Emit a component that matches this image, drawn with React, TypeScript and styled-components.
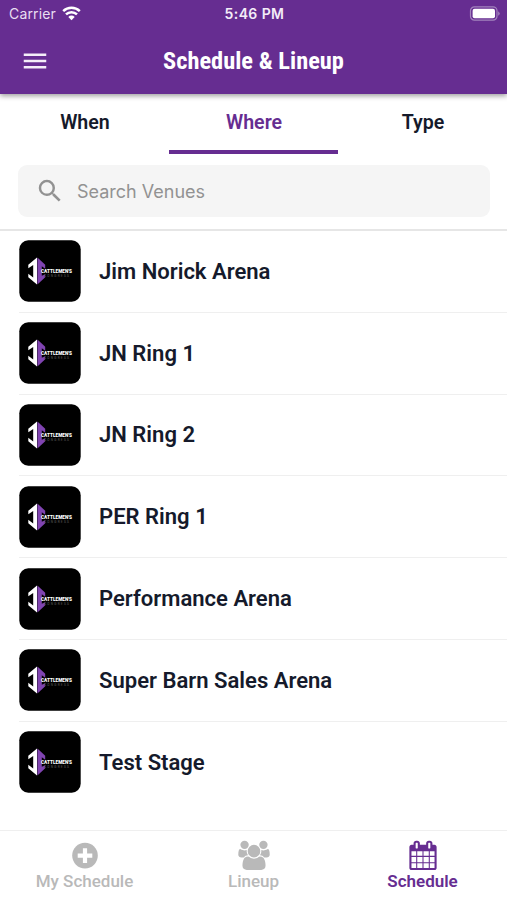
import React from "react";
import styled, { createGlobalStyle } from "styled-components";
import { MdMenu, MdSearch } from "react-icons/md";

const Global = createGlobalStyle`
  * { box-sizing: border-box; }
  body { margin: 0; background: #fff; font-family: Roboto, "Liberation Sans", sans-serif; }
`;

const Screen = styled.div`
  width: 507px;
  height: 900px;
  display: flex;
  flex-direction: column;
  background: #fff;
  overflow: hidden;
`;

const Header = styled.header`
  flex: none;
  height: 94px;
  background: #662d91;
  color: #fff;
  box-shadow: 0 2px 5px rgba(0, 0, 0, 0.38);
`;

const StatusBar = styled.div`
  height: 27px;
  padding: 0 7px 0 9px;
  display: grid;
  grid-template-columns: 1fr auto 1fr;
  align-items: center;
  font-family: Inter, sans-serif;
  font-size: 14px;
`;

const Carrier = styled.div`
  display: flex;
  align-items: center;
  gap: 6px;
  color: #e9dff1;
  letter-spacing: 0.15px;
`;

const Clock = styled.div`
  font-weight: 600;
  font-size: 14px;
  letter-spacing: 0.4px;
  color: #f3ecf8;
`;

const Battery = styled.svg`
  justify-self: end;
  display: block;
`;

const TitleBar = styled.div`
  height: 67px;
  display: grid;
  grid-template-columns: 1fr auto 1fr;
  align-items: center;
  padding: 0 20px;
`;

const MenuButton = styled.button`
  width: 30px;
  height: 30px;
  padding: 0;
  border: 0;
  background: none;
  color: #f4eef8;
  svg { display: block; }
`;

const Title = styled.h1`
  margin: 0;
  padding-top: 1px;
  font-family: "Roboto Condensed", Roboto, sans-serif;
  font-stretch: 75%;
  font-size: 24.4px;
  font-weight: 700;
  line-height: 30px;
  white-space: nowrap;
`;

const Tabs = styled.nav`
  flex: none;
  height: 60px;
  display: grid;
  grid-template-columns: repeat(3, 1fr);
`;

const Tab = styled.a<{ $active?: boolean }>`
  display: flex;
  align-items: center;
  justify-content: center;
  padding-left: 1px;
  font-size: 19.6px;
  font-weight: 600;
  color: ${(p) => (p.$active ? "#662d91" : "#151a2b")};
  box-shadow: inset 0 -4px ${(p) => (p.$active ? "#662d91" : "transparent")};
  padding-bottom: 4px;
`;

const SearchArea = styled.div`
  flex: none;
  height: 77px;
  padding: 11px 17px 14px 18px;
  border-bottom: 2px solid #e6e6e6;
`;

const SearchField = styled.div`
  height: 52px;
  display: flex;
  align-items: center;
  gap: 12px;
  padding-left: 17px;
  border-radius: 9px;
  background: #f5f5f5;
  color: #929292;
  font-family: Inter, sans-serif;
  font-size: 18px;
`;

const List = styled.ul`
  flex: 1;
  margin: 0;
  padding: 0 0 0 19px;
  list-style: none;
`;

const Row = styled.li`
  height: 81.8px;
  display: flex;
  align-items: center;
  gap: 18px;
  border-bottom: 1px solid #efefef;
  color: #151a2b;
  font-size: 22.05px;
  font-weight: 600;
  &:last-child { border-color: transparent; }
`;

const Thumb = styled.svg`
  flex: none;
  width: 62px;
  height: 62px;
`;

const BottomBar = styled.nav`
  flex: none;
  height: 70px;
  display: grid;
  grid-template-columns: repeat(3, 1fr);
  border-top: 1px solid #efefef;
`;

const BottomItem = styled.a<{ $active?: boolean }>`
  display: flex;
  flex-direction: column;
  align-items: center;
  padding-top: 9px;
  color: ${(p) => (p.$active ? "#662d91" : "#b9b9b9")};
  font-size: 17px;
  font-weight: ${(p) => (p.$active ? 600 : 500)};
  line-height: 22px;
  svg { display: block; height: 30px; }
`;

const Wifi = () => (
  <svg width="19" height="15" viewBox="0 0 19 15" fill="none" stroke="#fff" strokeWidth="2.5">
    <path d="M1.2 5.2a12 12 0 0 1 16.6 0M4 8.4a7.8 7.8 0 0 1 11 0" />
    <path d="M6.3 10.9a4.5 4.5 0 0 1 6.4 0l-3.2 3.3z" fill="#fff" stroke="none" />
  </svg>
);

const VenueLogo = () => (
  <Thumb viewBox="0 0 62 62">
    <rect x=".3" y=".3" width="61.4" height="61.4" rx="9" fill="#000" />
    <path d="M18 17.5v27L9.3 37.2v-3.4l4.9 3.6V25L9.3 28.2v-3.4z" fill="#fff" />
    <path d="M18.4 17.5l7.8 7.3v4l-3.4-2.5v9.5l3.4-1.5v3l-7.8 7.2z" fill="#8044b1" />
    <text x="22" y="32.8" fill="#fff" fontFamily="Roboto, sans-serif" fontSize="6" fontWeight="900" textLength="31" lengthAdjust="spacingAndGlyphs">CATTLEMEN'S</text>
    <text x="25" y="36.8" fill="#4d4d4d" fontFamily="Roboto, sans-serif" fontSize="3.2" fontWeight="500" textLength="25">CONGRESS</text>
  </Thumb>
);

const PlusIcon = () => (
  <svg width="26" height="30" viewBox="0 0 26 30">
    <circle cx="13" cy="15.6" r="12.8" fill="currentColor" />
    <path d="M10.9 8.3h4.2v5.2h5.2v4.2h-5.2v5.2h-4.2v-5.2H5.7v-4.2h5.2z" fill="#fff" />
  </svg>
);

const GroupIcon = () => (
  <svg width="32" height="30" viewBox="0 -40 1920 1832" fill="currentColor">
    <path d="M593 896q-162 5-265 128h-134q-82 0-138-40.5t-56-118.5q0-353 124-353 6 0 43.5 21t97.5 42.5 119 21.5q67 0 133-23-5 37-5 66 0 139 81 256zm1071 637q0 120-73 189.5t-194 69.5h-874q-121 0-194-69.5t-73-189.5q0-53 3.5-103.5t14-109 26.5-108.5 43-97.5 62-81 85.5-53.5 111.5-20q10 0 43 21.5t73 48 107 48 135 21.5 135-21.5 107-48 73-48 43-21.5q61 0 111.5 20t85.5 53.5 62 81 43 97.5 26.5 108.5 14 109 3.5 103.5zm-1024-1277q0 106-75 181t-181 75-181-75-75-181 75-181 181-75 181 75 75 181zm704 384q0 159-112.5 271.5t-271.5 112.5-271.5-112.5-112.5-271.5 112.5-271.5 271.5-112.5 271.5 112.5 112.5 271.5zm576 225q0 78-56 118.5t-138 40.5h-134q-103-123-265-128 81-117 81-256 0-29-5-66 66 23 133 23 59 0 119-21.5t97.5-42.5 43.5-21q124 0 124 353zm-128-609q0 106-75 181t-181 75-181-75-75-181 75-181 181-75 181 75 75 181z" />
  </svg>
);

const CalendarIcon = () => (
  <svg width="30" height="30" viewBox="0 -40 1792 1832" fill="currentColor">
    <path d="M192 1664h288v-288h-288v288zm352 0h320v-288h-320v288zm-352-352h288v-320h-288v320zm352 0h320v-320h-320v320zm-352-384h288v-288h-288v288zm736 736h320v-288h-320v288zm-384-736h320v-288h-320v288zm768 736h288v-288h-288v288zm-384-352h320v-320h-320v320zm-352-864v-288q0-13-9.5-22.5t-22.5-9.5h-64q-13 0-22.5 9.5t-9.5 22.5v288q0 13 9.5 22.5t22.5 9.5h64q13 0 22.5-9.5t9.5-22.5zm736 864h288v-320h-288v320zm-384-384h320v-288h-320v288zm384 0h288v-288h-288v288zm32-480v-288q0-13-9.5-22.5t-22.5-9.5h-64q-13 0-22.5 9.5t-9.5 22.5v288q0 13 9.5 22.5t22.5 9.5h64q13 0 22.5-9.5t9.5-22.5zm384-64v1280q0 52-38 90t-90 38h-1408q-52 0-90-38t-38-90v-1280q0-52 38-90t90-38h128v-96q0-66 47-113t113-47h64q66 0 113 47t47 113v96h384v-96q0-66 47-113t113-47h64q66 0 113 47t47 113v96h128q52 0 90 38t38 90z" />
  </svg>
);

const venues = ["Jim Norick Arena", "JN Ring 1", "JN Ring 2", "PER Ring 1", "Performance Arena", "Super Barn Sales Arena", "Test Stage"];

export default function App() {
  return (
    <Screen>
      <Global />
      <Header>
        <StatusBar>
          <Carrier>Carrier <Wifi /></Carrier>
          <Clock>5:46 PM</Clock>
          <Battery width="31" height="15" viewBox="0 0 31 15">
            <rect x="1.5" y=".8" width="26.5" height="13.4" rx="4" fill="none" stroke="#a384bd" strokeWidth="1.2" />
            <rect x="3.6" y="2.8" width="22.4" height="9.4" rx="2" fill="#fff" />
            <path d="M29.2 5.2q3 2.3 0 4.6z" fill="#a384bd" />
          </Battery>
        </StatusBar>
        <TitleBar>
          <MenuButton aria-label="Menu"><MdMenu size={30} /></MenuButton>
          <Title>Schedule &amp; Lineup</Title>
        </TitleBar>
      </Header>
      <Tabs>
        <Tab>When</Tab>
        <Tab $active>Where</Tab>
        <Tab>Type</Tab>
      </Tabs>
      <SearchArea>
        <SearchField><MdSearch size={30} />Search Venues</SearchField>
      </SearchArea>
      <List>
        {venues.map((name) => (
          <Row key={name}><VenueLogo />{name}</Row>
        ))}
      </List>
      <BottomBar>
        <BottomItem><PlusIcon />My Schedule</BottomItem>
        <BottomItem><GroupIcon />Lineup</BottomItem>
        <BottomItem $active><CalendarIcon />Schedule</BottomItem>
      </BottomBar>
    </Screen>
  );
}
